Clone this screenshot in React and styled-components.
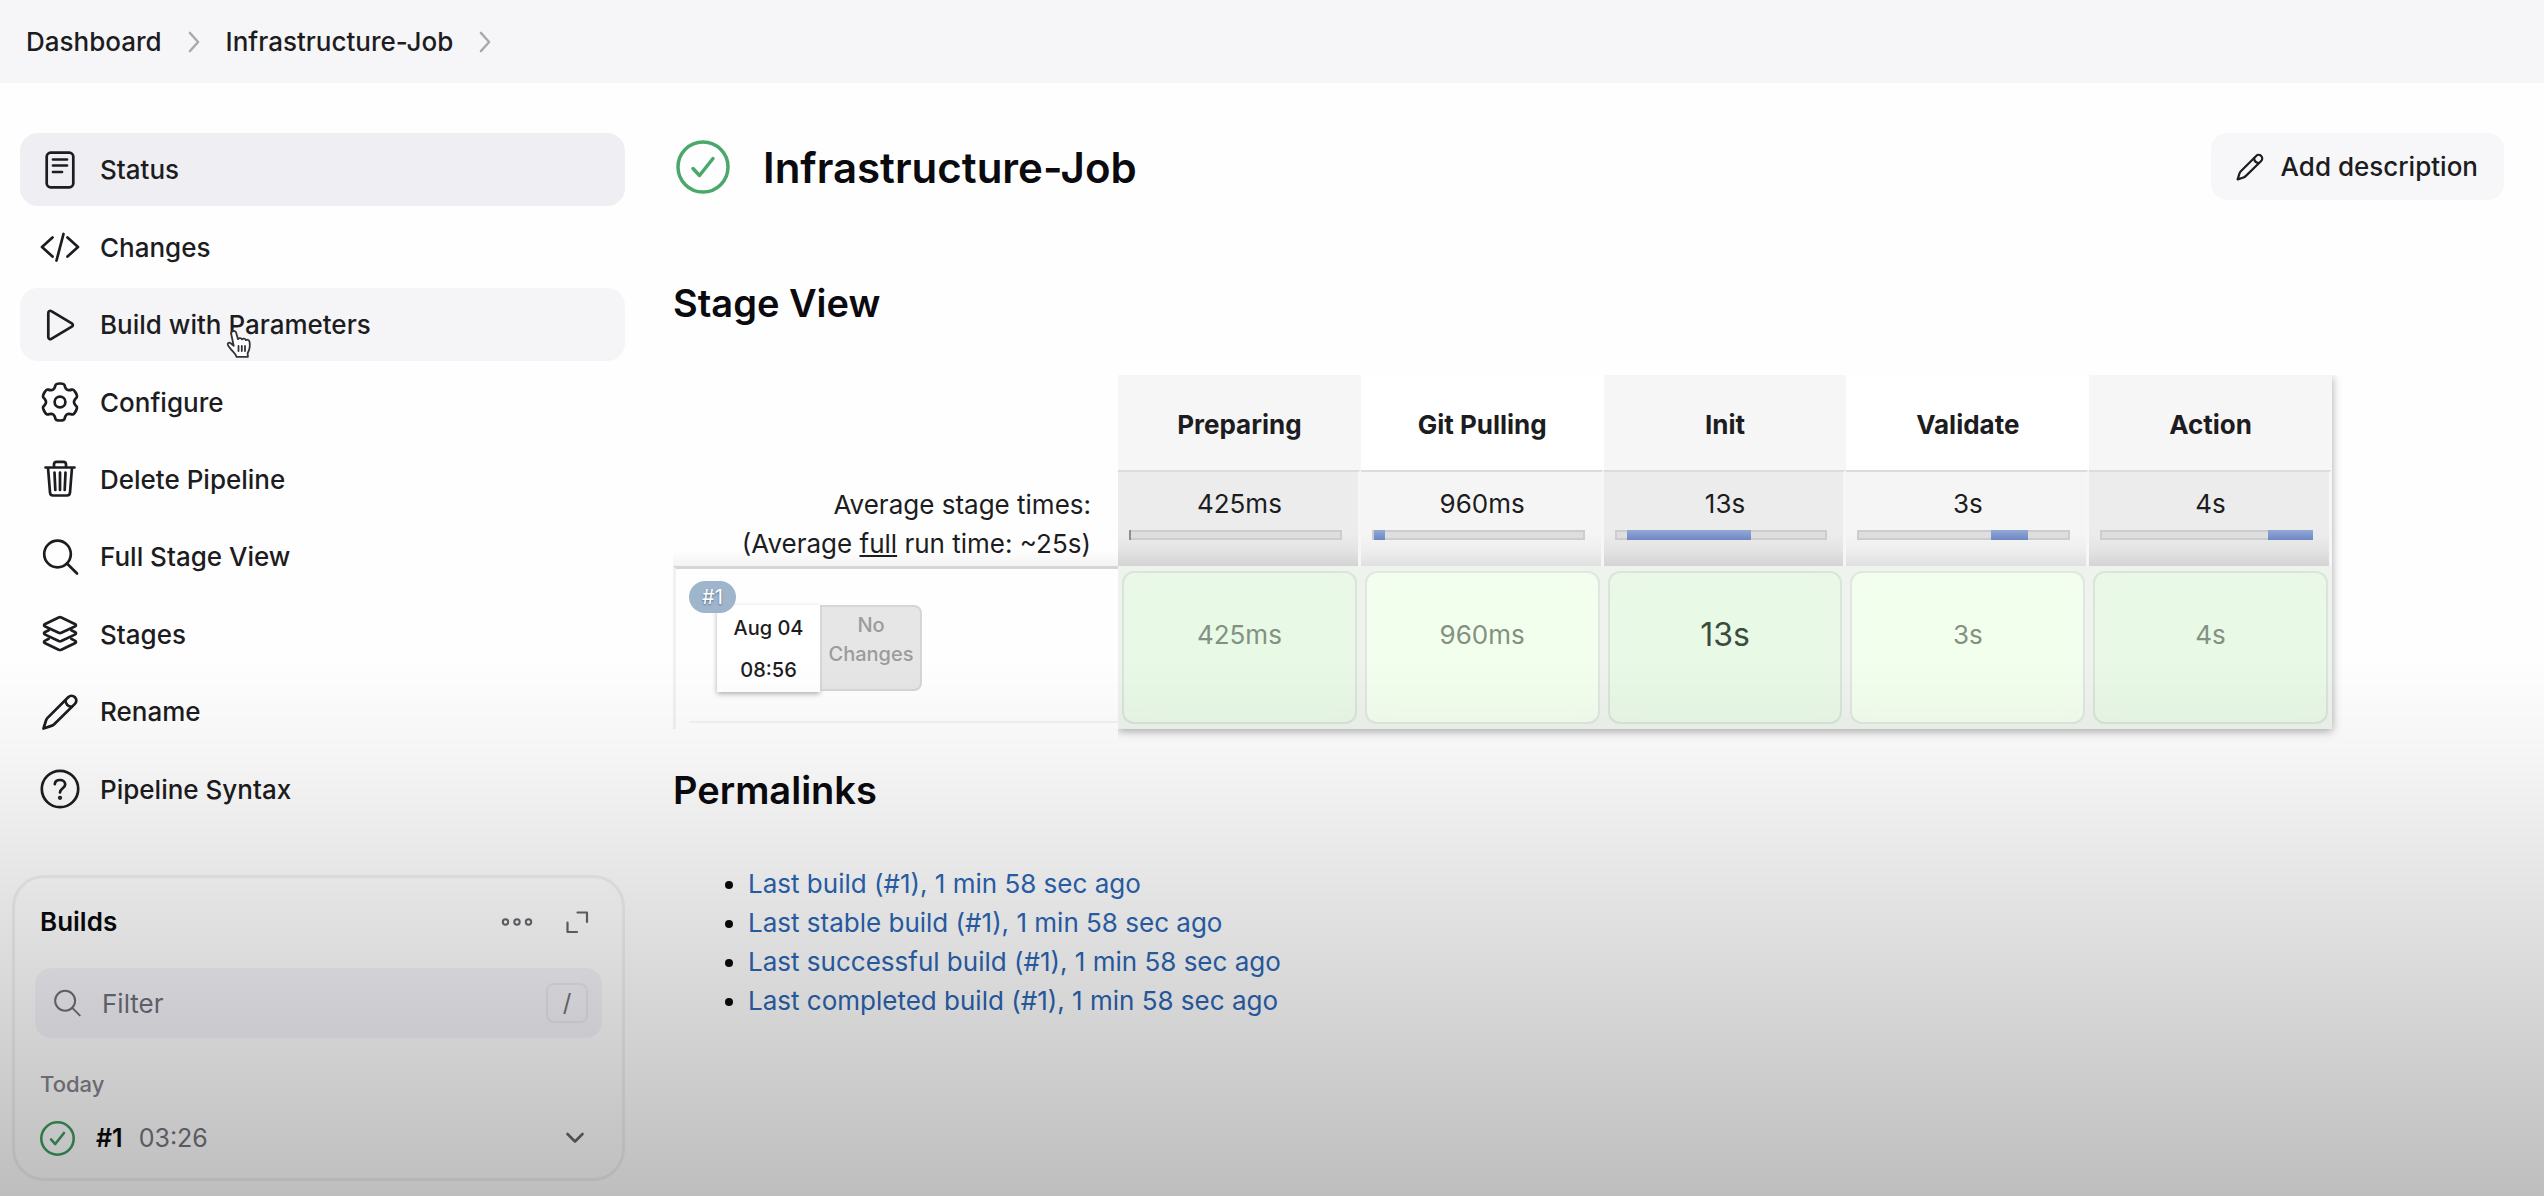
import React from "react";
import styled, { createGlobalStyle, css } from "styled-components";

const GlobalStyle = createGlobalStyle`
  *, *::before, *::after { box-sizing: border-box; }
  body {
    margin: 0;
    background: #fefefe;
    color: #1c1c21;
    font: 400 26px/39px Inter, "Liberation Sans", sans-serif;
  }
  a { color: inherit; text-decoration: none; }
  button, input { font: inherit; color: inherit; }
  ul, ol { margin: 0; padding: 0; }
  h1, h2, h3, h4 { margin: 0; font-weight: 600; color: #0b0b0f; }
`;

/* ---------- icons ---------- */

const Svg = styled.svg`
  display: block;
  flex: none;
  width: ${(p) => p.$size || 40}px;
  height: ${(p) => p.$size || 40}px;
  fill: none;
  stroke: currentColor;
  stroke-width: ${(p) => p.$stroke || 2.7};
  stroke-linecap: round;
  stroke-linejoin: round;
`;

const Icon = ({ size, stroke, box = 40, children }) => (
  <Svg $size={size} $stroke={stroke} viewBox={`0 0 ${box} ${box}`} aria-hidden="true">
    {children}
  </Svg>
);

const gearPath = (() => {
  const points = [];
  for (let k = 0; k < 6; k += 1) {
    [[-27, 14.6], [-19, 16], [-13, 19.4], [13, 19.4], [19, 16], [27, 14.6]].forEach(([offset, r]) => {
      const a = ((60 * k - 90 + offset) * Math.PI) / 180;
      points.push([20 + r * 0.96 * Math.cos(a), 20 + r * 0.98 * Math.sin(a)]);
    });
  }
  const mid = (a, b) => `${((a[0] + b[0]) / 2).toFixed(2)} ${((a[1] + b[1]) / 2).toFixed(2)}`;
  const n = points.length;
  let d = `M${mid(points[n - 1], points[0])}`;
  points.forEach((p, i) => {
    d += `Q${p[0].toFixed(2)} ${p[1].toFixed(2)} ${mid(p, points[(i + 1) % n])}`;
  });
  return `${d}Z`;
})();

const StatusIcon = () => (
  <Icon>
    <rect x="6.7" y="2.7" width="26.6" height="34.6" rx="4" />
    <path d="M13 9.5h14M13 15.5h14M13 22h9" />
  </Icon>
);
const ChangesIcon = () => (
  <Icon>
    <path d="M12.5 10.5 2 20l10.500 9.500M27.500 10.500 38 20l-10.500 9.500M23.500 7l-7 26.500" />
  </Icon>
);
const PlayIcon = () => (
  <Icon>
    <path d="M8.300 8v24c0 1.800 1.600 2.800 3 1.900l20.500-12.200c1.400-.8 1.400-2.600 0-3.400L11.300 6.100c-1.400-.9-3 .1-3 1.900Z" />
  </Icon>
);
const GearIcon = () => (
  <Icon>
    <path d={gearPath} />
    <circle cx="20" cy="20" r="5.400" />
  </Icon>
);
const TrashIcon = () => (
  <Icon>
    <path d="M5.500 8.500h29M8 8.500l2 25c.1 2 1.200 3 3 3h14c1.800 0 2.900-1 3-3l2-25M14 8.500V5.500c0-1.700 1-2.600 2.600-2.600h6.800c1.600 0 2.600.9 2.600 2.600v3" />
    <path d="M14.500 13.500l.8 17.500M20 13.500V31M25.500 13.500 24.700 31" />
  </Icon>
);
const SearchIcon = (props) => (
  <Icon {...props}>
    <circle cx="17.500" cy="17" r="13.300" />
    <path d="m27 26.500 10 10" />
  </Icon>
);
const LayersIcon = () => (
  <Icon>
    <path d="M21.300 3.500 34.800 10c1.600.8 1.600 1.800 0 2.600l-13.500 6.200c-.9.400-1.700.4-2.600 0L5.200 12.600c-1.600-.8-1.600-1.800 0-2.600l13.500-6.500c.9-.4 1.700-.4 2.600 0Z" />
    <path d="M8.700 16.200 5.200 18c-1.600.8-1.600 1.800 0 2.600l13.500 6.400c.9.400 1.700.4 2.600 0l13.500-6.400c1.600-.8 1.600-1.800 0-2.600l-3.500-1.800" />
    <path d="M8.700 24.800l-3.500 1.800c-1.600.8-1.600 1.800 0 2.600l13.500 6.500c.9.400 1.700.4 2.600 0l13.500-6.500c1.600-.8 1.600-1.800 0-2.600l-3.500-1.800" />
  </Icon>
);
const PencilIcon = (props) => (
  <Icon {...props}>
    <path d="M3.500 36.500 6 28.500c.4-1.200.9-2 1.800-2.900L28.200 5.200c1.900-1.900 4.800-1.900 6.700 0 1.900 1.900 1.900 4.800 0 6.700L14.200 32.200c-.9.900-1.700 1.300-2.900 1.700Z" />
    <path d="M25.500 8.500c.2 3.300 2.500 5.800 6 6.300" />
  </Icon>
);
const HelpIcon = () => (
  <Icon>
    <circle cx="20" cy="20" r="18.200" />
    <path d="M14.800 15.200c.2-2.700 2.300-4.200 5.200-4.200s5.200 1.700 5.200 4.400c0 3.800-5.200 3.900-5.200 8.100" />
    <circle cx="20" cy="28.800" r="0.800" fill="currentColor" />
  </Icon>
);
const CheckIcon = ({ size, stroke }) => (
  <Icon size={size} stroke={stroke} box={54}>
    <circle cx="27" cy="27" r="25" />
    <path d="m17 28.500 6.500 7L37 18.500" />
  </Icon>
);
const ChevronRight = () => (
  <Icon size={22} stroke={2.600} box={24}>
    <path d="m7.500 2 9 10-9 10" />
  </Icon>
);
const ChevronDown = () => (
  <Icon size={24} stroke={2.600} box={24}>
    <path d="m4.500 8 7.500 7.500L19.500 8" />
  </Icon>
);
const DotsIcon = () => (
  <Icon size={32} stroke={2} box={32}>
    <circle cx="4.500" cy="16" r="2.700" />
    <circle cx="16" cy="16" r="2.700" />
    <circle cx="27.500" cy="16" r="2.700" />
  </Icon>
);
const ExpandIcon = () => (
  <Icon size={24} stroke={2.200} box={24}>
    <path d="M12.500 2.500H22V12M2.500 12.500V22H12" />
  </Icon>
);

/* ---------- page frame ---------- */

const Page = styled.div`
  display: flex;
  flex-direction: column;
  min-height: 100vh;
`;

const Shade = styled.div`
  position: fixed;
  inset: 55% 0 0;
  pointer-events: none;
  background: linear-gradient(rgba(0, 0, 0, 0), rgba(0, 0, 0, 0.03) 16%, rgba(0, 0, 0, 0.25));
`;

const Breadcrumbs = styled.nav`
  padding: 22px 26px;
  background: #f6f6f8;
  font-weight: 450;

  ol {
    display: flex;
    align-items: center;
    list-style: none;
  }
  li {
    display: flex;
    align-items: center;
    gap: 21px;
    margin-right: 21px;
  }
  svg { color: #a9a9b0; }
`;

const Columns = styled.div`
  display: flex;
  flex: 1;
  gap: 48px;
  padding: 50px 40px 14px 12px;
`;

/* ---------- sidebar ---------- */

const Sidebar = styled.aside`
  flex: none;
  width: 613px;
`;

const TaskList = styled.ul`
  display: grid;
  grid-auto-rows: 1fr;
  gap: 4px;
  height: 693px;
  margin: 0 0 49px 8px;
  list-style: none;
`;

const Task = styled.a`
  display: flex;
  align-items: center;
  gap: 20px;
  height: 100%;
  padding: 0 20px;
  border-radius: 18px;
  font-weight: 450;
  ${(p) => p.$tone === "active" && css`background: #eeeef3;`}
  ${(p) => p.$tone === "hover" && css`background: #f5f5f8;`}
`;

const Pointed = styled.span`
  position: relative;
`;

const Hand = styled.svg`
  position: absolute;
  left: 126px;
  top: 24px;
  width: 26px;
  height: 30px;
  fill: #fff;
  stroke: #33333a;
  stroke-width: 1.8;
  stroke-linejoin: round;
  stroke-linecap: round;
`;

const BuildsCard = styled.section`
  padding: 24px 20px 20px;
  border: 3px solid #f1f1f3;
  border-radius: 32px;
`;

const CardHead = styled.header`
  display: flex;
  align-items: center;
  gap: 32px;
  padding: 0 13px 0 5px;
  margin-bottom: 27px;

  h2 {
    flex: 1;
    font-size: 26px;
    line-height: 39px;
  }
`;

const IconButton = styled.button`
  display: flex;
  padding: 0;
  border: 0;
  background: none;
  color: #66666e;
`;

const Filter = styled.label`
  display: flex;
  align-items: center;
  gap: 20px;
  height: 70px;
  padding: 0 14px 0 17px;
  border-radius: 16px;
  background: #f5f5f9;
  color: #70707c;

  input {
    flex: 1;
    min-width: 0;
    padding: 0;
    border: 0;
    outline: 0;
    background: none;
  }
  input::placeholder { color: #70707c; opacity: 1; }
`;

const Key = styled.kbd`
  width: 42px;
  border: 2px solid #e9e9ee;
  border-radius: 8px;
  font: 400 24px/36px Inter, "Liberation Sans", sans-serif;
  text-align: center;
`;

const DayLabel = styled.h3`
  margin: 28px 5px 16px;
  font-size: 22px;
  font-weight: 500;
  line-height: 36px;
  color: #84848c;
`;

const BuildRow = styled.div`
  display: flex;
  align-items: center;
  padding: 0 15px 0 5px;
  font-size: 25px;
  line-height: 40px;

  & > svg {
    margin-right: 21px;
    color: #3f9c5d;
  }
  a {
    margin-right: 16px;
    font-weight: 600;
    color: #0b0b0f;
  }
  time {
    flex: 1;
    color: #74747e;
  }
`;

/* ---------- main panel ---------- */

const Main = styled.main`
  flex: 1;
  min-width: 0;
`;

const TitleBar = styled.header`
  display: flex;
  align-items: center;
  height: 67px;
  padding-left: 3px;
  margin-bottom: 73px;

  & > svg { color: #4ba86b; }
  h1 {
    flex: 1;
    padding-top: 2px;
    margin-left: 33px;
    font-size: 42px;
    line-height: 60px;
  }
`;

const ActionButton = styled.button`
  display: flex;
  align-items: center;
  gap: 16px;
  height: 67px;
  padding: 0 26px 0 24px;
  border: 0;
  border-radius: 16px;
  background: #f7f7f9;
  font-weight: 450;
`;

const SectionTitle = styled.h2`
  font-size: 38px;
  line-height: 60px;
`;

const StageTable = styled.table`
  position: relative;
  z-index: 0;
  width: 1659px;
  margin: 42px 0 31px;
  border-spacing: 0;
  table-layout: fixed;

  &::before {
    content: "";
    position: absolute;
    z-index: -1;
    inset: 0 0 0 445px;
    box-shadow: 0 2px 9px rgba(0, 0, 0, 0.35);
    clip-path: inset(0 -16px -16px 0);
  }
  th, td { padding: 0; }
  th { font-weight: 400; }
`;

const CornerCell = styled.td`
  width: 445px;
`;

const StageHead = styled.th`
  && {
    height: 95px;
    padding-top: 4px;
    background: ${(p) => (p.$odd ? "#f6f6f6" : "#ffffff")};
    font-weight: 700;
  }
`;

const AverageLabel = styled.th`
  && {
    padding: 14px 27px 3px 0;
    background: linear-gradient(#fefefe 84%, #f3f3f3);
    text-align: right;
    vertical-align: bottom;
  }
`;

const AverageCell = styled.td`
  && {
    height: 96px;
    padding: 12px 0 26px 3px;
    border-top: 2px solid #dcdcdc;
    border-right: 3px solid #f6f6f6;
    background: ${(p) =>
      p.$odd
        ? "linear-gradient(#ececec 65%, #e4e4e4 82%, #d4d4d4)"
        : "linear-gradient(#f5f5f5 65%, #efefef 82%, #e0e0e0)"};
    text-align: center;
  }
`;

const Track = styled.div`
  display: flex;
  height: 10px;
  margin: 7px 16px 0 8px;
  background: #dedede;
  box-shadow: inset 0 0 0 2px #cdcdcd;
`;

const Segment = styled.i`
  background: ${(p) => (p.$tiny ? "#8e8e8e" : "linear-gradient(#93a9d4, #6d87c6)")};
`;

const RunCell = styled.th`
  && {
    height: 163px;
    padding: 12px 0 6px 13px;
    border-top: 3px solid #d6d6d8;
    border-left: 3px solid #f1f1f3;
    background: linear-gradient(#f3f3f4, #f3f3f4) 0 100% / 100% 2px no-repeat content-box, #fefefe;
    text-align: left;
    vertical-align: top;
  }
`;

const RunBadge = styled.a`
  position: absolute;
  padding: 0 13px;
  border-radius: 16px;
  background: #9fb5cc;
  color: #fff;
  font-size: 20px;
  line-height: 32px;
  text-shadow: 0 1px 2px #4f6a88;
`;

const RunInfo = styled.div`
  display: flex;
  margin: 24px 0 0 28px;
  font-size: 20px;
  font-weight: 450;
`;

const RunDate = styled.div`
  width: 103px;
  height: 87px;
  padding-top: 2px;
  background: #fff;
  box-shadow: 0 2px 5px rgba(0, 0, 0, 0.3);
  line-height: 42px;
  text-align: center;
`;

const RunChanges = styled.div`
  width: 102px;
  height: 86px;
  padding-top: 4px;
  border: 2px solid #d6d6d6;
  border-radius: 0 8px 8px 0;
  background: #e6e6e6;
  color: #9b9b9b;
  line-height: 29px;
  text-align: center;
`;

const StageCell = styled.td`
  && {
    padding: 5px 4px;
    background: #eef3ee;
  }
`;

const StageTile = styled.div`
  height: 153px;
  border: 2px solid ${(p) => (p.$odd ? "#d8e6d8" : "#dfe8dd")};
  border-radius: 12px;
  background: ${(p) => (p.$odd ? "#e8fae6" : "#f3ffed")};
  box-shadow: inset 0 0 24px ${(p) => (p.$odd ? "#edf5ea" : "#f4fbf2")};
  color: ${(p) => (p.$strong ? "#3b4b3c" : "#839183")};
  font-size: ${(p) => (p.$strong ? 32 : 26)}px;
  line-height: 124px;
  text-align: center;
`;

const Permalinks = styled.ul`
  padding: 44px 0 0 75px;
  color: #0b0b0f;

  a { color: #2c66b4; }
`;

/* ---------- content ---------- */

const tasks = [
  { label: "Status", icon: StatusIcon, tone: "active" },
  { label: "Changes", icon: ChangesIcon },
  { label: "Build with Parameters", icon: PlayIcon, tone: "hover" },
  { label: "Configure", icon: GearIcon },
  { label: "Delete Pipeline", icon: TrashIcon },
  { label: "Full Stage View", icon: SearchIcon },
  { label: "Stages", icon: LayersIcon },
  { label: "Rename", icon: PencilIcon },
  { label: "Pipeline Syntax", icon: HelpIcon },
];

const stages = [
  { name: "Preparing", time: "425ms", start: 0, share: 1 },
  { name: "Git Pulling", time: "960ms", start: 1, share: 5 },
  { name: "Init", time: "13s", start: 6, share: 58, strong: true },
  { name: "Validate", time: "3s", start: 63, share: 17 },
  { name: "Action", time: "4s", start: 79, share: 21 },
];

const permalinks = [
  "Last build (#1), 1 min 58 sec ago",
  "Last stable build (#1), 1 min 58 sec ago",
  "Last successful build (#1), 1 min 58 sec ago",
  "Last completed build (#1), 1 min 58 sec ago",
];

const HandPointer = () => (
  <Hand viewBox="0 0 26 30" aria-hidden="true">
    <path d="M7 2.200c1.600-.6 2.800.3 3.200 1.700l1.800 6.300c1-1.500 3.300-1.400 4 .2 1.200-1.200 3.200-.8 3.800.7 1.500-.9 3.500.1 3.800 2 .6 4-.1 7.900-2 11.100l.3 3.600H10.500c-.7-3-3.100-4.800-5.300-7.200-1.300-1.500-2.700-3-3.400-4.900-.6-1.700 1.500-2.700 2.900-1.500l3 2.600L5.200 5C4.900 3.700 5.700 2.600 7 2.200Z" />
    <path d="M12.500 17v5M15.800 17v5M19 17v5" />
  </Hand>
);

export default function App() {
  return (
    <Page>
      <GlobalStyle />
      <Breadcrumbs aria-label="Breadcrumb">
        <ol>
          <li><a href="#dashboard">Dashboard</a><ChevronRight /></li>
          <li><a href="#job">Infrastructure-Job</a><ChevronRight /></li>
        </ol>
      </Breadcrumbs>

      <Columns>
        <Sidebar>
          <TaskList>
            {tasks.map(({ label, icon: TaskIcon, tone }) => (
              <li key={label}>
                <Task href="#task" $tone={tone}>
                  <TaskIcon />
                  {tone === "hover" ? <Pointed>{label}<HandPointer /></Pointed> : label}
                </Task>
              </li>
            ))}
          </TaskList>

          <BuildsCard>
            <CardHead>
              <h2>Builds</h2>
              <IconButton type="button" aria-label="More actions"><DotsIcon /></IconButton>
              <IconButton type="button" aria-label="Expand"><ExpandIcon /></IconButton>
            </CardHead>
            <Filter>
              <SearchIcon size={30} stroke={2.700} />
              <input type="text" placeholder="Filter" aria-label="Filter" />
              <Key>/</Key>
            </Filter>
            <DayLabel>Today</DayLabel>
            <BuildRow>
              <CheckIcon size={35} stroke={4} />
              <a href="#build-1">#1</a>
              <time>03:26</time>
              <IconButton type="button" aria-label="Build menu"><ChevronDown /></IconButton>
            </BuildRow>
          </BuildsCard>
        </Sidebar>

        <Main>
          <TitleBar>
            <CheckIcon size={54} stroke={3.500} />
            <h1>Infrastructure-Job</h1>
            <ActionButton type="button"><PencilIcon size={30} stroke={2.900} />Add description</ActionButton>
          </TitleBar>

          <SectionTitle>Stage View</SectionTitle>
          <StageTable>
            <thead>
              <tr>
                <CornerCell />
                {stages.map((s, i) => (
                  <StageHead key={s.name} scope="col" $odd={i % 2 === 0}>{s.name}</StageHead>
                ))}
              </tr>
            </thead>
            <tbody>
              <tr>
                <AverageLabel scope="row">
                  Average stage times:<br />
                  (Average <u>full</u> run time: ~25s)
                </AverageLabel>
                {stages.map((s, i) => (
                  <AverageCell key={s.name} $odd={i % 2 === 0}>
                    {s.time}
                    <Track>
                      <Segment $tiny={s.share < 2} style={{ marginLeft: `${s.start}%`, width: `${s.share}%` }} />
                    </Track>
                  </AverageCell>
                ))}
              </tr>
              <tr>
                <RunCell scope="row">
                  <RunBadge href="#run-1">#1</RunBadge>
                  <RunInfo>
                    <RunDate>Aug 04<br />08:56</RunDate>
                    <RunChanges>No<br />Changes</RunChanges>
                  </RunInfo>
                </RunCell>
                {stages.map((s, i) => (
                  <StageCell key={s.name}>
                    <StageTile $odd={i % 2 === 0} $strong={s.strong}>{s.time}</StageTile>
                  </StageCell>
                ))}
              </tr>
            </tbody>
          </StageTable>

          <SectionTitle>Permalinks</SectionTitle>
          <Permalinks>
            {permalinks.map((text) => (
              <li key={text}><a href="#build-1">{text}</a></li>
            ))}
          </Permalinks>
        </Main>
      </Columns>
      <Shade />
    </Page>
  );
}
